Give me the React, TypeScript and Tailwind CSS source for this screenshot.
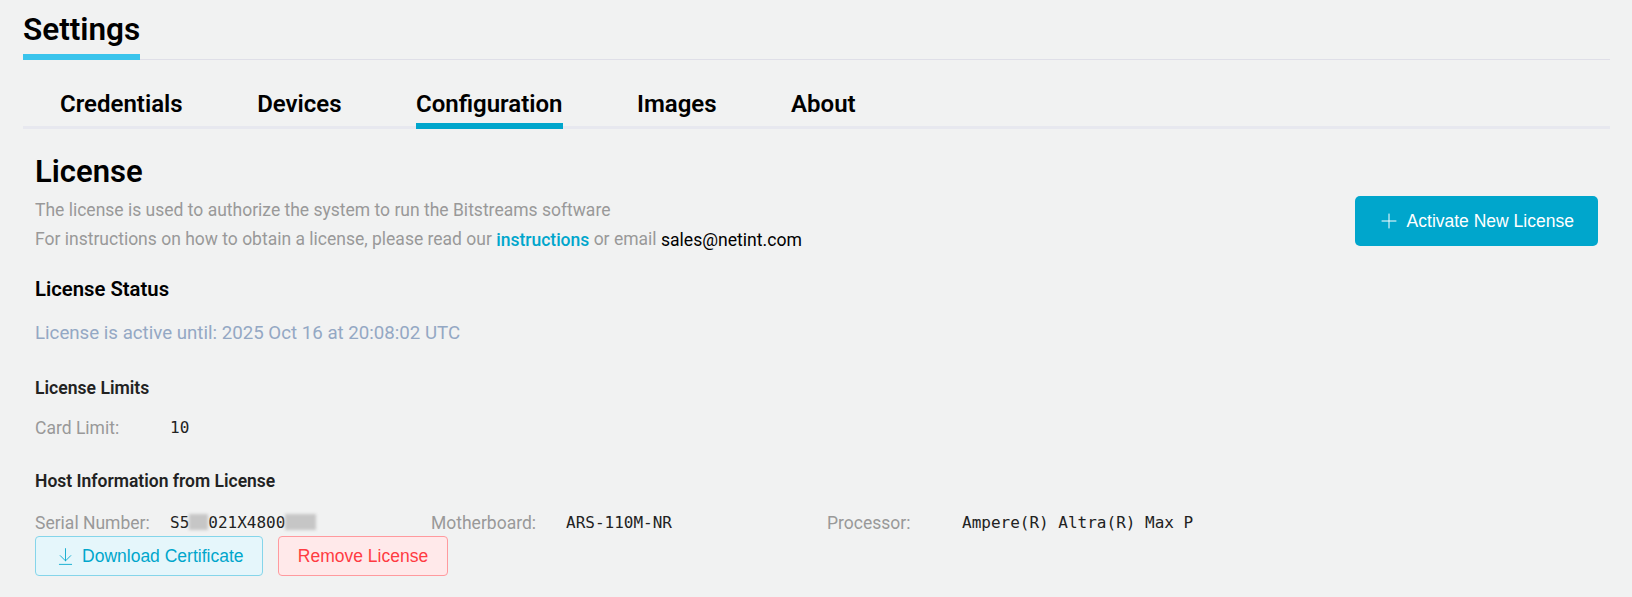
import { ArrowDownToLine, Plus } from "lucide-react";

const tabs = ["Credentials", "Devices", "Configuration", "Images", "About"];

function HostField({ label, children }: { label: string; children: React.ReactNode }) {
  return (
    <div className="flex w-[396px] items-center">
      <span className="w-[135px] text-[17.5px] text-[#999]">{label}</span>
      <span className="whitespace-nowrap font-['DejaVu_Sans_Mono',monospace] text-[16px] text-[#222]">{children}</span>
    </div>
  );
}

function Redacted({ width }: { width: string }) {
  return <span className={`inline-block h-[16px] ${width} bg-[#c6c6c6] blur-[1.5px] align-[-2px]`} />;
}

export default function App() {
  return (
    <div className="h-[597px] overflow-hidden bg-[#f1f2f2] pl-[23px] pr-[22px] font-['Roboto',sans-serif] text-black">
      <div className="h-[60px] border-b border-[#dfdfe8]">
        <h1 className="inline-block h-[60px] border-b-[6px] border-[#3ac4ec] pt-[8px] text-[31.5px] leading-[44px] font-semibold">
          Settings
        </h1>
      </div>

      <div className="flex h-[69px] items-end gap-[74.5px] border-b-[3px] border-[#e7e8ef] pl-[37px]">
        {tabs.map((tab) => (
          <div
            key={tab}
            className={`-mb-[3px] h-[41px] text-[24px] leading-[32px] font-semibold ${
              tab === "Configuration" ? "border-b-[6px] border-[#00a6cc]" : ""
            }`}
          >
            {tab}
          </div>
        ))}
      </div>

      <div className="pl-[12px] pr-[12px]">
        <div className="flex items-start justify-between">
          <div>
            <h2 className="mt-[21px] text-[31px] leading-[44px] font-semibold">License</h2>
            <p className="mt-[2px] text-[17.5px] leading-[29px] text-[#999]">
              The license is used to authorize the system to run the Bitstreams software
            </p>
            <p className="text-[17.5px] leading-[29px] text-[#999]">
              For instructions on how to obtain a license, please read our{" "}
              <a className="relative top-[1px] font-medium text-[#00a6cc]">instructions</a> or email{" "}
              <span className="relative top-[1px] text-[17.6px] text-black">sales@netint.com</span>
            </p>
          </div>
          <button className="mt-[67px] flex h-[50px] w-[243px] items-center justify-center gap-[5.5px] rounded-[5px] bg-[#00a6cc] pr-[2px] font-['Liberation_Sans',sans-serif] text-[17.5px] text-white">
            <Plus size={24} strokeWidth={1} />
            Activate New License
          </button>
        </div>

        <h3 className="mt-[21px] text-[20.3px] leading-[28px] font-semibold">License Status</h3>
        <p className="mt-[16px] text-[18.7px] leading-[28px] text-[#94a8c4]">
          License is active until: 2025 Oct 16 at 20:08:02 UTC
        </p>

        <h4 className="mt-[27px] text-[17.6px] leading-[28px] font-semibold text-[#222]">License Limits</h4>
        <div className="mt-[13px]">
          <HostField label="Card Limit:">10</HostField>
        </div>

        <h4 className="mt-[26px] text-[17.5px] leading-[28px] font-semibold text-[#222]">
          Host Information from License
        </h4>
        <div className="mt-[14px] flex h-[27px]">
          <HostField label="Serial Number:">
            S5
            <Redacted width="w-[19px]" />
            021X4800
            <Redacted width="w-[31px]" />
          </HostField>
          <HostField label="Motherboard:">ARS-110M-NR</HostField>
          <HostField label="Processor:">Ampere(R) Altra(R) Max P</HostField>
        </div>

        <div className="flex gap-[15px] font-['Liberation_Sans',sans-serif] text-[17.5px]">
          <button className="flex h-[40px] w-[228px] items-center justify-center gap-[6.5px] rounded-[4px] border border-[#85d5ea] bg-[#e5f6fb] text-[#00a6cc]">
            <ArrowDownToLine size={21} strokeWidth={1} />
            Download Certificate
          </button>
          <button className="h-[40px] w-[170px] rounded-[4px] border border-[#ff9a9e] bg-[#ffe9ea] text-[#ff3b42]">
            Remove License
          </button>
        </div>
      </div>
    </div>
  );
}
